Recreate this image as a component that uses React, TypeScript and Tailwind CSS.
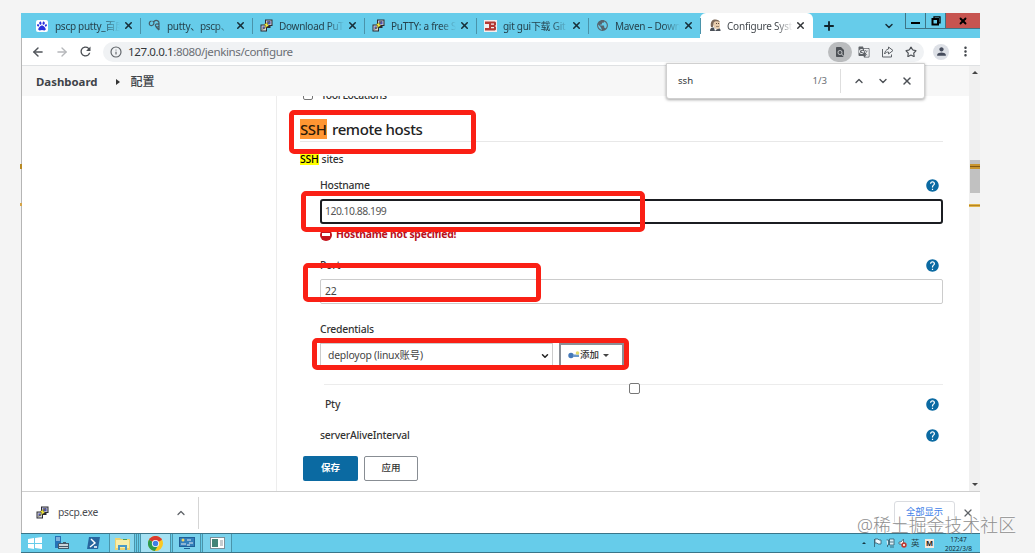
import React from 'react';
import {
  ArrowLeft,
  ArrowRight,
  ChevronDown,
  ChevronUp,
  Info,
  Plus,
  Star,
  X,
} from 'lucide-react';
import { MdFindInPage, MdGTranslate, MdHelp, MdMoreVert, MdPerson, MdPublic, MdRefresh } from 'react-icons/md';
import { FaPaw } from 'react-icons/fa';

const PuttyIcon: React.FC = () => (
  <svg width="13" height="13" viewBox="0 0 13 13">
    <path d="M5 .5h7.500v6.500h-2v2H7V7H5z" fill="#2a2a33" />
    <path d="M6 1.500h5.500v4.500H6z" fill="#c8c8d0" />
    <path d="M7 2.200h3.500v3H7z" fill="#4b50b4" />
    <path d="M.5 5.500h6.500v7H.5z" fill="#2a2a33" />
    <path d="M1.500 6.500h4.500v5H1.500z" fill="#d4d4d4" />
    <path d="M2.500 7.500h2.500v2.500H2.500z" fill="#4b50b4" />
    <path d="M9.500 2.500L4 5.500l2 1.500-3.500 3.500L9 6.500 7 5z" fill="#f3e838" stroke="#4a471d" strokeWidth=".4" />
  </svg>
);

const BaiduIcon: React.FC = () => (
  <span className="flex h-3 w-3 items-center justify-center rounded-xs bg-white">
    <FaPaw className="h-[10px] w-[10px] text-[#2a32dd]" />
  </span>
);

const CurlIcon: React.FC = () => (
  <svg width="13" height="13" viewBox="0 0 13 13" fill="none" stroke="#455b66" strokeWidth="1.2">
    <path d="M3.500 2C0 3 1 7.500 4 6.500S6 2 4.500 2.500M6 2.500c2-2 5-1 5 1.500v7M11 5.500C8 4 6.500 6 8 7.500s3-.5 3-.5M8 8l3 3" />
  </svg>
);

const BoxIcon: React.FC = () => (
  <svg width="13" height="12" viewBox="0 0 13 12">
    <rect width="13" height="12" fill="#f5eeee" />
    <path d="M1 1.500h10l1 1v2.500l-1 1 1 1v2.500l-1 1H1V8h4V4H1z" fill="#b33a34" />
    <path d="M7 3.500h3v1.200H7zM7 7h3v1.200H7z" fill="#f5eeee" />
  </svg>
);

const JenkinsIcon: React.FC = () => (
  <svg width="13" height="13" viewBox="0 0 13 13">
    <path d="M1 12c0-2 1-3.500 2.500-3.500l6 .5c2 .5 2 2 2 3z" fill="#4b5058" />
    <path d="M3 3c1-3 7-3 8 1v4c-1 3-5 3-6 0z" fill="#e8cdae" />
    <path d="M2 8C1 3 3 .5 6 .5c3 0 4 1 5 2.500C8 1.500 5 2 4.500 4L4 8z" fill="#7d6a5c" />
    <path d="M5 9l3 1-2 2z" fill="#fff" />
    <path d="M7 4h1v1H7zM9 4h1v1H9zM7 7h3v.6H7z" fill="#5b4538" />
  </svg>
);

const ShareIcon: React.FC = () => (
  <svg width="13" height="13" viewBox="0 0 13 13" fill="none" stroke="#5f6368" strokeWidth="1">
    <path d="M1.500 4v8h9V9.500" />
    <path d="M7.500 2v2C5 4.500 4 6.500 3.500 9c1-1.500 2.500-2 4-2v2L12 5.500z" strokeLinejoin="round" />
  </svg>
);

const tabs = [
  { title: 'pscp putty_百度', icon: BaiduIcon },
  { title: 'putty、pscp、', icon: CurlIcon },
  { title: 'Download PuT', icon: PuttyIcon },
  { title: 'PuTTY: a free S', icon: PuttyIcon },
  { title: 'git gui下载 Git', icon: BoxIcon },
  { title: 'Maven – Down', icon: () => <MdPublic className="h-[13px] w-[13px] text-[#56646e]" /> },
];

const TabStrip: React.FC = () => (
  <div className="flex h-[25px] bg-[#66ccea] pl-2">
    {tabs.map((tab) => {
      const Icon = tab.icon;
      return (
        <div key={tab.title} className="relative flex w-28 shrink-0 items-center pl-[7px]">
          <span className="flex w-[19px] items-center">
            <Icon />
          </span>
          <span className="w-[65px] whitespace-nowrap pt-px text-[10px] tracking-[-0.28px] text-[#26434e] [mask-image:linear-gradient(90deg,#000_75%,transparent)]">
            {tab.title}
          </span>
          <X className="ml-[3px] h-[11px] w-[11px] text-[#17303a]" strokeWidth={3.4} />
          <span className="absolute right-0 top-[5px] h-4 w-px bg-[#4a93aa]" />
        </div>
      );
    })}
    <div className="-ml-px flex w-[113px] shrink-0 items-center rounded-t-[6px] bg-white pl-[9px]">
      <span className="flex w-[18px] items-center">
        <JenkinsIcon />
      </span>
      <span className="w-[66px] whitespace-nowrap pt-px text-[10px] tracking-[-0.2px] text-[#454a4f] [mask-image:linear-gradient(90deg,#000_75%,transparent)]">
        Configure Syst
      </span>
      <X className="ml-[2px] h-[11px] w-[11px] text-[#303336]" strokeWidth={3} />
    </div>
    <div className="flex flex-1 items-center pl-[9px]">
      <Plus className="h-[14px] w-[14px] text-[#10242c]" strokeWidth={3.2} />
    </div>
    <ChevronDown className="mr-[10px] mt-[7px] h-3 w-3 text-[#17303a]" strokeWidth={3} />
    <div className="flex h-4 shrink-0 border-b border-l border-[#3d7486]">
      <div className="flex w-[20px] justify-center border-r border-[#3d7486] pt-[9px]">
        <span className="h-[2px] w-[9px] bg-black" />
      </div>
      <div className="flex w-[20px] items-center justify-center border-r border-[#3d7486]">
        <svg width="10" height="10" viewBox="0 0 10 10" fill="none" stroke="#000">
          <path d="M3 2V.8h6v6H8" strokeWidth="1.300" />
          <path d="M1.500 3h5.500v5.500H1.500z" strokeWidth="2" />
        </svg>
      </div>
      <div className="flex w-[34px] items-center justify-center bg-[#c75450]">
        <X className="h-[10px] w-[10px] text-black" strokeWidth={4.5} />
      </div>
    </div>
  </div>
);

const Toolbar: React.FC = () => (
  <div className="flex h-[28px] items-center border-b border-[#dfe1e3] bg-white pl-[9px]">
    <ArrowLeft className="h-[14px] w-[14px] text-[#50545a]" strokeWidth={2.5} />
    <ArrowRight className="ml-[10px] h-[14px] w-[14px] text-[#b5b7ba]" strokeWidth={2.3} />
    <MdRefresh className="ml-[9px] h-[15px] w-[15px] text-[#4b4f54]" />
    <div className="ml-[10px] flex h-5 flex-1 items-center rounded-full bg-[#f0f2f4] pl-[7px]">
      <Info className="h-3 w-3 text-[#5f6368]" strokeWidth={2.3} />
      <span className="ml-[6px] flex-1 whitespace-nowrap text-[11.6px] tracking-[-0.42px] text-[#6b6f74]">
        <span className="text-[#33373b]">127.0.0.1</span>:8080/jenkins/configure
      </span>
      <span className="flex h-5 w-6 items-center justify-center rounded-full bg-[#babcbe]">
        <MdFindInPage className="h-3 w-3 text-[#4d5156]" />
      </span>
      <MdGTranslate className="ml-[6px] h-3 w-3 text-[#5f6368]" />
      <span className="ml-[11px]">
        <ShareIcon />
      </span>
      <Star className="ml-[11px] mr-[7px] h-3 w-3 text-[#4d5156]" strokeWidth={2.3} />
    </div>
    <span className="ml-[9px] flex h-4 w-4 items-center justify-center rounded-full bg-[#dde0e6]">
      <MdPerson className="h-[13px] w-[13px] text-[#464c5c]" />
    </span>
    <MdMoreVert className="ml-[9px] mr-[7px] h-[15px] w-[15px] text-[#45494e]" />
  </div>
);

const FindBar: React.FC = () => (
  <div className="absolute left-[645px] top-[50px] flex h-9 w-[259px] items-center rounded-b-[3px] border border-[#d0d0d0] bg-white pl-[11px] text-[9.6px] shadow-[0_1px_3px_rgba(0,0,0,0.35)]">
    <span className="flex-1 text-[#33363a]">ssh</span>
    <span className="text-[#6b6f74]">1/3</span>
    <span className="ml-[13px] h-6 w-px bg-[#dedede]" />
    <ChevronUp className="ml-3 h-3 w-3 text-[#4d5156]" strokeWidth={2.8} />
    <ChevronDown className="ml-3 h-3 w-3 text-[#4d5156]" strokeWidth={2.8} />
    <X className="ml-3 mr-[11px] h-3 w-3 text-[#4d5156]" strokeWidth={3} />
  </div>
);

const HelpIcon: React.FC = () => <MdHelp className="mr-[3px] h-[15px] w-[15px] text-[#0b6aa2]" />;

const Label: React.FC<{ text: string; help?: boolean; className?: string }> = ({ text, help, className }) => (
  <div className={`flex h-5 items-center justify-between ${className ?? ''}`}>
    <span className="pt-[2px]">{text}</span>
    {help && <HelpIcon />}
  </div>
);

const ConfigForm: React.FC = () => (
  <div className="h-full pl-[23px] pr-[26px] text-[10.4px] font-medium tracking-[-0.22px] text-[#333]">
    <div className="-mt-2 flex h-[14px] items-center pl-[3px]">
      <span className="h-[10px] w-[10px] rounded-[2px] border border-[#777]" />
      <span className="ml-2 pt-px tracking-[-0.38px]">Tool Locations</span>
    </div>
    <div className="flex h-10 items-end border-b border-[#e8e8e8] pb-[2px] text-[15px] leading-5 tracking-[-0.4px] text-[#222]">
      <span className="w-[27px] bg-[#ff9632] text-[#2b1a08]">SSH</span>
      <span className="ml-[5px]">remote hosts</span>
    </div>
    <div className="flex h-[33px] items-center leading-[12px]">
      <span className="bg-[#ffff00] text-black">SSH</span>
      <span className="ml-[3px]">sites</span>
    </div>
    <div className="pl-5">
      <Label text="Hostname" help />
      <div className="mt-1 flex h-[25px] items-center rounded-[3px] border-2 border-[#1b1d21] pl-[3px] pt-px font-normal tracking-[-0.5px] text-[#555]">
        120.10.88.199
      </div>
      <div className="flex h-[21px] items-center font-bold tracking-[-0.25px] text-[#b8101c]">
        <span className="mr-1 flex h-3 w-3 items-center justify-center rounded-full bg-[#c4141c]">
          <span className="h-[3px] w-2 bg-white" />
        </span>
        Hostname not specified!
      </div>
      <Label text="Port" help className="mt-[10px]" />
      <div className="mt-1 flex h-[25px] items-center rounded-[2px] border border-[#ccc] pl-1 pt-px font-normal text-[#444]">
        22
      </div>
      <Label text="Credentials" className="mt-[15px]" />
      <div className="mt-1 flex h-[25px]">
        <div className="flex w-[233px] items-center justify-between border border-[#ccc] pl-[7px] pr-[2px] font-normal text-[#444]">
          <span className="pt-px">deployop (linux账号)</span>
          <ChevronDown className="h-[10px] w-[10px] text-[#222]" strokeWidth={3.6} />
        </div>
        <div className="ml-[6px] flex w-[65px] items-center border-2 border-[#8a8f96] pl-[7px]">
          <svg width="12" height="9" viewBox="0 0 12 9">
            <circle cx="3" cy="4.500" r="2.700" fill="#4478b8" />
            <path d="M5 3.500h6v2.500H5z" fill="#6c9acb" />
            <circle cx="9.500" cy="2" r="1.800" fill="#e4dc6b" />
          </svg>
          <span className="text-[9.5px] tracking-normal">添加</span>
          <span className="ml-[4px] border-x-[3px] border-t-[3px] border-x-transparent border-t-[#444]" />
        </div>
      </div>
      <div className="relative ml-1 mt-[16px] h-px bg-[#ececec]">
        <span className="absolute left-[305px] -top-px h-[11px] w-[11px] rounded-[2px] border border-[#777] bg-white" />
      </div>
      <div className="mt-[9px] flex flex-col gap-[11px]">
        <Label text="Pty" help className="pl-[5px]" />
        <Label text="serverAliveInterval" help />
      </div>
    </div>
    <div className="ml-[3px] mt-[11px] flex gap-[6px] text-[9.5px] font-bold tracking-normal">
      <button className="h-[25px] w-[55px] rounded-[2px] bg-[#0b6aa2] text-white">保存</button>
      <button className="h-[25px] w-[54px] rounded-[2px] border border-[#888d93] font-medium text-[#333]">应用</button>
    </div>
  </div>
);

const Scrollbar: React.FC = () => (
  <div className="flex w-[11px] shrink-0 flex-col items-center bg-[#f0f0f0]">
    <span className="mt-[5px] border-x-[3px] border-b-[3px] border-x-transparent border-b-[#444]" />
    <span className="mt-[86px] h-[33px] w-full border-l border-[#f0f0f0] bg-[#c1c1c1]">
      <span className="mt-[4px] block h-[5px] border-y-2 border-[#c8942c] bg-[#805714]" />
    </span>
    <span className="mt-[11px] h-[3px] w-full border-y border-[#e0b44b] bg-[#b78524]" />
    <span className="mb-[5px] mt-auto border-x-[3px] border-t-[3px] border-x-transparent border-t-[#444]" />
  </div>
);

const DownloadBar: React.FC = () => (
  <div className="flex h-[42px] items-center border-t border-[#cfcfcf] bg-white text-[10.3px]">
    <div className="flex h-8 w-[177px] items-center border-r border-[#d5d5d5] pl-[14px]">
      <PuttyIcon />
      <span className="ml-[9px] flex-1 tracking-[-0.25px] text-[#4a4d52]">pscp.exe</span>
      <ChevronUp className="mr-[11px] h-3 w-3 text-[#5f6368]" strokeWidth={2.5} />
    </div>
    <div className="ml-auto flex h-[24px] w-[61px] items-center justify-center rounded-[3px] border border-[#dadce0] pb-px text-[9.3px] text-[#3e80e8]">
      全部显示
    </div>
    <X className="ml-[7px] mr-[6px] h-3 w-3 text-[#5f6368]" strokeWidth={2.5} />
  </div>
);

const Taskbar: React.FC = () => (
  <div className="flex h-[20px] border-y border-[#3a7589] bg-[#66ccea]">
    <div className="flex w-[27px] items-center justify-center">
      <svg width="14" height="12" viewBox="0 0 14 12" fill="#fff">
        <path d="M0 2l6-1v5H0zM7 1l7-1v6H7zM0 7h6v5l-6-1zM7 7h7v5l-7-1z" />
      </svg>
    </div>
    <div className="flex w-[30px] items-center pl-[6px]">
      <svg width="16" height="16" viewBox="0 0 16 16">
        <path d="M1 1h6v12H1z" fill="#2672b6" />
        <path d="M2 3h4M2 5h4" stroke="#d7efff" />
        <path d="M5 8h4V7h3v1h3v6H4V9z" fill="#42596a" />
        <path d="M5 9h9v2H5zM5 12h9v1H5z" fill="#cad3d8" />
      </svg>
    </div>
    <div className="flex w-[31px] items-center pl-[8px]">
      <svg width="15" height="14" viewBox="0 0 15 14">
        <path d="M3 1h11l-2 12H1z" fill="#27669f" />
        <path d="M5 3l4 4-5 4M8 11h3" stroke="#fff" strokeWidth="1.400" fill="none" />
      </svg>
    </div>
    <div className="flex w-[26px] items-center justify-center border-x border-[#4a94aa] bg-[#8bd8ef]">
      <svg width="17" height="15" viewBox="0 0 17 15">
        <path d="M1 2h5l1 1h9v11H1z" fill="#ecd372" />
        <path d="M2 4h13v8H2z" fill="#f9eea8" />
        <path d="M4 9h9v5h-2v-3H6v3H4z" fill="#4b99c7" />
        <path d="M9 3h4v1H9z" fill="#4a9f56" />
      </svg>
    </div>
    <div className="ml-[1px] w-[3px] border-x border-[#4a94aa]" />
    <div className="ml-[1px] flex w-[31px] items-center justify-center border-x border-[#4a94aa] bg-[#a5e1f3]">
      <svg width="15" height="15" viewBox="0 0 20 20">
        <circle cx="10" cy="10" r="10" fill="#fbc822" />
        <path d="M10 10L1.300 5A10 10 0 0 1 18.700 5z" fill="#d93b30" />
        <path d="M10 10L1.300 5A10 10 0 0 0 9 20l5-8z" fill="#2a9a4d" />
        <circle cx="10" cy="10" r="4.800" fill="#fff" />
        <circle cx="10" cy="10" r="3.700" fill="#3f7fe5" />
      </svg>
    </div>
    <div className="ml-[1px] flex w-[29px] items-center justify-center border-x border-[#4a94aa] bg-[#7ad2ec]">
      <svg width="16" height="14" viewBox="0 0 16 14">
        <path d="M0 1h16v10H0zM5 12h6v1H5z" fill="#205f96" />
        <path d="M1 2h14v8H1z" fill="#337fbb" />
        <circle cx="4" cy="4" r="1.500" fill="#f0d461" />
        <path d="M2 8h5M8 4h4M10 7h4M8 9h3" stroke="#e5edf2" />
      </svg>
    </div>
    <div className="ml-[1px] flex w-[30px] items-center justify-center border-x border-[#4a94aa] bg-[#7ad2ec]">
      <svg width="15" height="12" viewBox="0 0 15 12">
        <path d="M0 0h15v12H0z" fill="#7b8f98" />
        <path d="M1 1h13v10H1z" fill="#fff" />
        <path d="M2 2h6v8H2z" fill="#448477" />
        <path d="M10 3h3v6h-3z" fill="#c6cccf" />
      </svg>
    </div>
    <div className="ml-auto flex items-center">
      <span className="mr-[7px] border-x-2 border-b-2 border-x-transparent border-b-[#173844]" />
      <svg width="35" height="10" viewBox="0 0 35 10" fill="none">
        <path d="M1.500 1v8M2 1h3l1 1h2v4H5L4 5H2z" stroke="#31596a" strokeWidth=".8" fill="#eefaff" />
        <path d="M13.500 2h2v5h-1v2M16.500 1h4.500v6h-4.500zM16.500 4h4M17 9h4" stroke="#31596a" strokeWidth=".8" fill="#d8eff7" />
        <path d="M26 4h2l2.500-3v8L28 6h-2z" stroke="#40606d" strokeWidth=".8" fill="#fff" />
        <circle cx="31" cy="7" r="2.700" fill="#c03b32" />
        <path d="M30 6l2 2m0-2l-2 2" stroke="#fff" strokeWidth=".8" />
      </svg>
      <span className="ml-[3px] w-[14px] text-[8.5px] leading-none text-[#233f49]">英</span>
      <span className="w-[9px] bg-[#f5e9df] text-center text-[7.5px] font-bold leading-[9px] text-[#201c1a]">M</span>
      <div className="ml-[9px] w-[31px] whitespace-nowrap pt-px text-center text-[6.5px] leading-[9px] text-[#102d38]">
        <div>17:47</div>
        <div>2022/3/8</div>
      </div>
      <span className="w-[6px]" />
    </div>
  </div>
);

export default function App() {
  return (
    <div className="relative h-[553px] w-[1035px] overflow-hidden bg-[#f4f4f4] pl-[21px] pt-[13px] font-['Noto_Sans','Noto_Sans_CJK_SC',sans-serif]">
      <div className="relative w-[959px]">
        <TabStrip />
        <div className="border-l border-[#b5b5b5]">
          <Toolbar />
          <div className="flex h-[425px] bg-white">
            <div className="flex min-w-0 flex-1 flex-col">
              <div className="flex h-[30px] shrink-0 items-center bg-[#f7f7f7] pl-[14px] pt-px text-[11.4px] text-[#3f4449]">
                <span className="font-bold">Dashboard</span>
                <span className="ml-[18px] border-y-[3px] border-l-[4px] border-y-transparent border-l-[#333]" />
                <span className="ml-[11px] text-[12px] font-medium">配置</span>
              </div>
              <div className="flex h-[395px]">
                <div className="w-[255px] shrink-0 border-r border-[#ededed]" />
                <div className="min-w-0 flex-1 overflow-hidden">
                  <ConfigForm />
                </div>
              </div>
            </div>
            <Scrollbar />
          </div>
          <DownloadBar />
        </div>
        <Taskbar />
        <FindBar />
      </div>

      {/* highlight frames */}
      <div className="absolute left-[289px] top-[110px] h-[44px] w-[187px] rounded-[5px] border-[5px] border-[#fa2015]" />
      <div className="absolute left-[301px] top-[191px] h-[41px] w-[344px] rounded-[5px] border-[5px] border-[#fa2015]" />
      <div className="absolute left-[303px] top-[263px] h-[39px] w-[238px] rounded-[5px] border-[5px] border-[#fa2015]" />
      <div className="absolute left-[312px] top-[338px] h-[32px] w-[317px] rounded-[5px] border-[5px] border-[#fa2015]" />

      {/* scroll markers on the window edge */}
      <span className="absolute left-[20px] top-[164px] h-[5px] w-[2px] bg-[#b88a24]" />
      <span className="absolute left-[20px] top-[203px] h-[3px] w-[2px] bg-[#d6a548]" />

      <div className="absolute left-[857px] top-[513px] whitespace-nowrap text-[17.9px] font-light leading-6 text-[#8f8f8f] [text-shadow:-1px_-1px_0_rgba(255,255,255,0.7)]">
        @稀土掘金技术社区
      </div>
    </div>
  );
}
